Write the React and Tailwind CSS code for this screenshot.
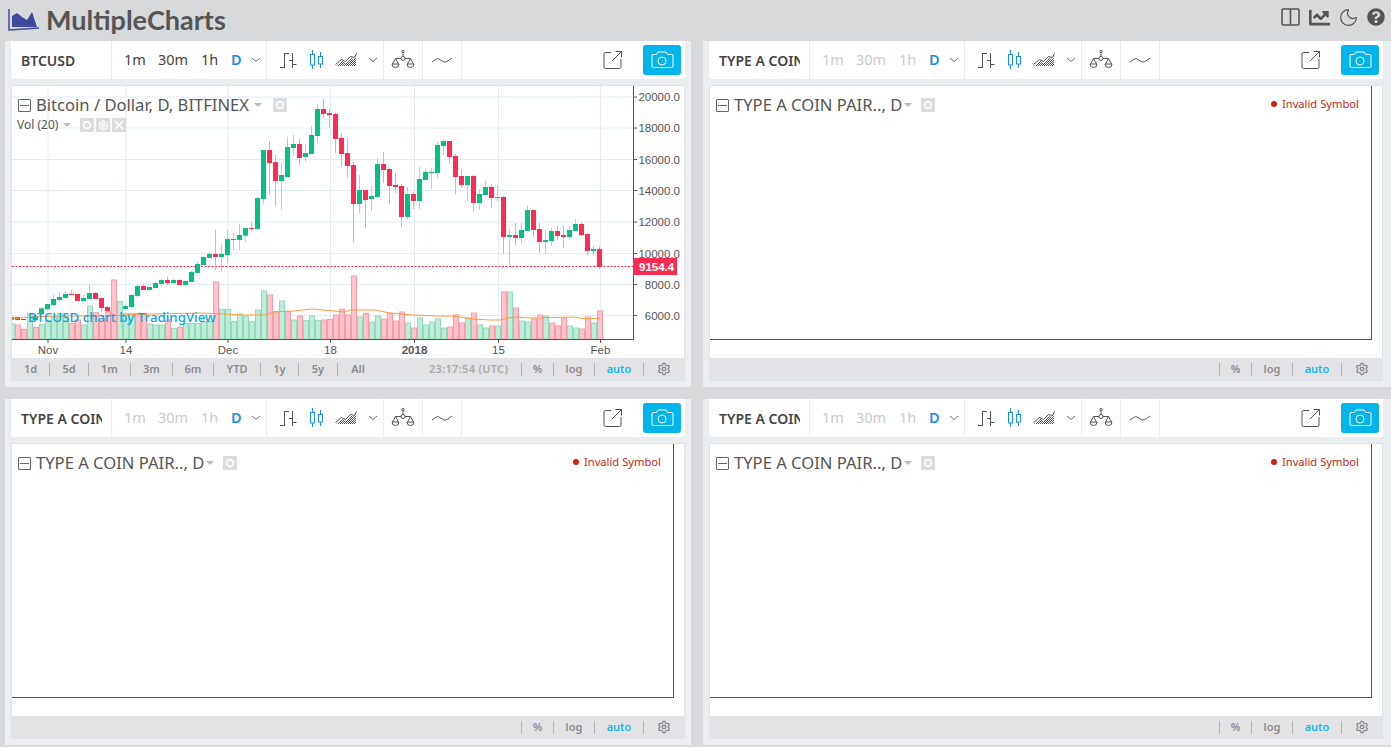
import { FaChartLine, FaQuestionCircle } from "react-icons/fa";
import { Moon, Settings } from "lucide-react";

const UI_FONT = "font-['Noto_Sans',sans-serif]";

// left part of the series, y in px / from zoomed crops
const fromLeft = [
  [291, 291, 300, 300, 1],
  [291, 291, 300, 300, 0],
  [297, 297, 300, 300, 0],
  [295, 297, 300, 303, 1],
  [285, 288, 300, 303, 1],
  [262, 265, 279, 285, 1],
  [252, 252, 268, 270, 1],
  [225, 237, 255, 258, 1],
  [216, 231, 240, 243, 1],
  [213, 222, 234, 237, 1],
  [210, 222, 225, 225, 0],
  [222, 222, 243, 243, 0],
  [225, 234, 243, 243, 1],
  [195, 219, 237, 237, 1],
  [216, 219, 237, 237, 0],
  [234, 234, 264, 276, 0],
  [258, 261, 273, 285, 0],
  [267, 270, 297, 297, 0],
  [258, 265, 285, 291, 1],
  [252, 258, 267, 270, 1],
  [222, 225, 261, 261, 1],
  [195, 198, 228, 232, 1],
  [192, 198, 210, 210, 0],
  [198, 201, 210, 213, 1],
  [186, 189, 204, 204, 1],
  [177, 180, 192, 201, 1],
  [171, 180, 189, 195, 0],
  [177, 180, 189, 189, 1],
  [178, 180, 195, 195, 0],
  [183, 183, 195, 195, 1],
  [153, 156, 186, 186, 1],
  [126, 132, 159, 159, 1],
  [108, 111, 135, 135, 1],
  [96, 102, 114, 114, 1],
  [30, 102, 111, 150, 0],
  [72, 102, 111, 153, 1],
  [30, 57, 105, 129, 1],
  [39, 57, 60, 90, 1],
  [12, 45, 60, 90, 1],
].map(([h, t, b, l, g]) => [h / 3 + 220, t / 3 + 220, b / 3 + 220, l / 3 + 220, g]);

const fromMid = [
  [414, 414, 437, 455, 1],
  [396, 414, 417, 423, 0],
  [321, 324, 417, 417, 1],
  [178, 180, 327, 342, 1],
  [153, 180, 219, 315, 0],
  [195, 216, 273, 348, 0],
  [219, 255, 273, 360, 1],
  [141, 171, 261, 261, 1],
  [135, 162, 174, 198, 1],
  [147, 162, 204, 225, 0],
  [162, 189, 201, 216, 1],
  [108, 135, 192, 192, 1],
  [42, 57, 138, 159, 1],
  [27, 57, 72, 84, 0],
  [57, 69, 75, 114, 0],
  [69, 72, 147, 189, 0],
  [129, 144, 192, 231, 0],
  [144, 189, 228, 264, 0],
  [216, 225, 342, 456, 0],
  [255, 300, 342, 369, 1],
  [300, 300, 330, 414, 0],
  [288, 318, 327, 363, 1],
  [204, 222, 321, 321, 1],
  [186, 222, 240, 279, 0],
  [234, 237, 288, 342, 0],
  [249, 285, 291, 309, 0],
  [282, 288, 381, 411, 0],
  [291, 312, 381, 387, 1],
  [306, 312, 333, 357, 0],
  [231, 267, 333, 357, 1],
  [234, 246, 270, 270, 1],
  [234, 246, 249, 297, 1],
  [156, 165, 249, 267, 1],
].map(([h, t, b, l, g]) => [h / 3 + 90, t / 3 + 90, b / 3 + 90, l / 3 + 90, g]);

const fromRight = [
  [60, 63, 78, 105, 1],
  [63, 63, 111, 132, 0],
  [102, 108, 171, 222, 0],
  [147, 168, 195, 204, 0],
  [168, 168, 195, 243, 1],
  [165, 168, 249, 276, 0],
  [207, 222, 249, 270, 1],
  [183, 201, 225, 225, 1],
  [192, 201, 234, 264, 0],
  [195, 231, 234, 243, 1],
  [228, 231, 351, 402, 0],
  [327, 345, 351, 435, 1],
  [309, 345, 354, 375, 0],
  [309, 330, 354, 369, 1],
  [258, 270, 333, 333, 1],
  [270, 270, 330, 351, 0],
  [309, 327, 366, 399, 0],
  [330, 360, 366, 402, 1],
  [324, 333, 363, 378, 1],
  [318, 333, 348, 360, 0],
  [318, 345, 351, 384, 0],
  [318, 330, 351, 360, 1],
  [297, 312, 333, 333, 1],
  [306, 312, 345, 348, 0],
  [339, 342, 393, 405, 0],
  [378, 387, 393, 408, 1],
  [381, 387, 441, 447, 0],
].map(([h, t, b, l, g]) => [h / 3 + 120, t / 3 + 120, b / 3 + 120, l / 3 + 120, g]);

const candles = [...fromLeft, ...fromMid, ...fromRight];

// volume bar tops in zoomed px, base is 207
const volumes = [
  [165, 0], [178, 0], [130, 1], [172, 0], [163, 1], [152, 1], [140, 1], [130, 1], [140, 1], [160, 0],
  [150, 0], [165, 1], [108, 1], [128, 0], [145, 0], [125, 0], [30, 0], [95, 1], [130, 1], [130, 1],
  [130, 0], [130, 0], [162, 1], [165, 1], [165, 1], [150, 0], [175, 1], [172, 0], [160, 1], [160, 1],
  [160, 1], [155, 1], [155, 1], [36, 0], [118, 1], [118, 1], [155, 1], [132, 1], [140, 1], [155, 1],
  [120, 1], [63, 1], [75, 0], [125, 0], [93, 1], [125, 0], [150, 1], [138, 0], [152, 1], [138, 1],
  [152, 1], [150, 0], [148, 0], [135, 0], [118, 0], [135, 0], [18, 0], [141, 1], [130, 0], [156, 1],
  [138, 1], [147, 0], [130, 0], [153, 0], [126, 0], [159, 1], [174, 0], [144, 1], [165, 1], [156, 1],
  [147, 1], [174, 1], [171, 0], [135, 0], [159, 0], [144, 1], [129, 0], [165, 1], [174, 1], [168, 0],
  [168, 1], [66, 0], [66, 1], [114, 0], [153, 1], [156, 1], [147, 0], [135, 0], [138, 1], [159, 0],
  [168, 0], [144, 0], [168, 1], [174, 1], [177, 0], [141, 0], [159, 1], [123, 0],
];

const maLine =
  "12,319 30,317 60,316 100,316 150,314 200,313 225,314 240,315 265,315 273,312 293,311 313,309 345,312 350,310 375,310 390,313 413,315 440,316 453,316 473,319 490,320 500,320 513,317 533,318 573,317 586,319 600,318";

const priceTicks = [
  ["20000.0", 97],
  ["18000.0", 128],
  ["16000.0", 159.5],
  ["14000.0", 190.5],
  ["12000.0", 222],
  ["10000.0", 253.5],
  ["8000.0", 284.5],
  ["6000.0", 315.5],
];

const timeTicks = [
  ["Nov", 48],
  ["14", 126],
  ["Dec", 228],
  ["18", 330.5],
  ["2018", 414.5],
  ["15", 498.5],
  ["Feb", 600.5],
];

const PriceChart = () => (
  <svg viewBox="12 86 672 272" className="block w-[672px] h-[272px]">
    <defs>
      <clipPath id="plot">
        <rect x="12" y="86" width="621" height="253" />
      </clipPath>
    </defs>
    {priceTicks.map(([, y]) => (
      <line key={y} x1="12" x2="633" y1={y} y2={y} stroke="#e1ecf3" strokeWidth="1" />
    ))}
    {timeTicks.map(([, x]) => (
      <line key={x} x1={x} x2={x} y1="86" y2="339" stroke="#e1ecf3" strokeWidth="1" />
    ))}
    <line x1="12" x2="633" y1="266.5" y2="266.5" stroke="#ff2b52" strokeWidth="1" strokeDasharray="2 1.5" />

    <g clipPath="url(#plot)">
      {candles.map(([high, top, bottom, low, up], i) => {
        const cx = 11.5 + i * 6;
        return (
          <g key={i}>
            <line x1={cx} x2={cx} y1={high} y2={low} stroke={up ? "#9edcc4" : "#f5a3b4"} strokeWidth="1" />
            <rect x={cx - 2.5} y={top} width="5" height={bottom - top} fill={up ? "#03c087" : "#ff2b52"} />
          </g>
        );
      })}
      <rect x="11" y="324" width="4" height="15" fill="#bfecd8" stroke="#8fdcbd" />
      {volumes.map(([top, up], i) => {
        const x = 15 + i * 6;
        const y = 270 + top / 3;
        return (
          <rect
            key={i}
            x={x + 0.5}
            y={y}
            width="5"
            height={339 - y}
            fill={up ? "#bfecd8" : "#ffc4cb"}
            stroke={up ? "#8fdcbd" : "#fb9aa9"}
            strokeWidth="1"
          />
        );
      })}
      <polyline points={maLine} fill="none" stroke="#ff9a3c" strokeWidth="1" />
    </g>

    <line x1="12" x2="633" y1="339.5" y2="339.5" stroke="#555" strokeWidth="1" />
    <line x1="633.5" x2="633.5" y1="86" y2="340" stroke="#555" strokeWidth="1" />

    {priceTicks.map(([label, y]) => (
      <g key={label}>
        <line x1="634" x2="637" y1={y} y2={y} stroke="#555" />
        <text x="680" y={y + 4} textAnchor="end" fontSize="11.5" fill="#555" fontFamily="Liberation Sans, sans-serif">
          {label}
        </text>
      </g>
    ))}
    {timeTicks.map(([label, x]) => (
      <g key={label}>
        <line x1={x} x2={x} y1="340" y2="343" stroke="#555" />
        <text
          x={x}
          y="354"
          textAnchor="middle"
          fontSize="11.5"
          fontWeight={label === "2018" ? 700 : 400}
          fill="#555"
          fontFamily="Liberation Sans, sans-serif"
        >
          {label}
        </text>
      </g>
    ))}
    <rect x="633" y="258" width="44" height="17" fill="#ff2b52" />
    <text x="639" y="270.5" fontSize="11.5" fontWeight="700" fill="#fff" fontFamily="Liberation Sans, sans-serif">
      9154.4
    </text>
  </svg>
);

const BarsIcon = () => (
  <svg width="22" height="22" viewBox="0 0 22 22" fill="none" stroke="#50535e" strokeWidth="1">
    <path d="M7.5 4v15M3 18.5h4.5M7.5 4.5h4.5M15.5 4v15M12 11.5h3.5M15.5 15.5h4" />
  </svg>
);

const CandlesIcon = () => (
  <svg width="22" height="22" viewBox="0 0 22 22" fill="none" stroke="#1a8de6" strokeWidth="1">
    <path d="M5.5 1v4M5.5 16v4M13.5 3v4M13.5 15v4" />
    <rect x="3.5" y="5.5" width="4" height="10.5" />
    <rect x="11.5" y="7.5" width="4" height="7.5" />
  </svg>
);

const AreaIcon = ({ id }) => (
  <svg width="24" height="22" viewBox="0 0 24 22" fill="none">
    <defs>
      <pattern id={id} width="2" height="2" patternUnits="userSpaceOnUse">
        <rect width="1" height="1" fill="#50535e" />
        <rect x="1" y="1" width="1" height="1" fill="#50535e" />
      </pattern>
    </defs>
    <path d="M2 17l6-5 4 2 5-5 4 1 1-4v11z" fill={`url(#${id})`} />
    <path d="M1.5 15.5l6-5 4 2 5-5 4 1 2-4" stroke="#50535e" />
  </svg>
);

const ScalesIcon = () => (
  <svg width="26" height="22" viewBox="0 0 26 22" fill="none" stroke="#50535e" strokeWidth="1">
    <circle cx="13" cy="9.5" r="2" />
    <circle cx="13" cy="2.5" r="1.2" />
    <path d="M13 4v3.5M11 9.5H5.5L2.5 15M15 9.5h5.5l3 5.5M5.5 9.5l3 5.5M20.5 9.5l-3 5.5" />
    <path d="M2 15h7M17 15h7M2 15a3.5 3.5 0 0 0 7 0M17 15a3.5 3.5 0 0 0 7 0" />
  </svg>
);

const LineIcon = () => (
  <svg width="24" height="22" viewBox="0 0 24 22" fill="none" stroke="#50535e" strokeWidth="1">
    <path d="M2 13c3-2 5-4 7-3s4 3 6 3 4-2 7-4" />
  </svg>
);

const Chevron = () => (
  <svg width="10" height="6" viewBox="0 0 10 6" fill="none" stroke="#6b6e78" strokeWidth="1">
    <path d="M1 1l4 3.5L9 1" />
  </svg>
);

const ToolbarSegment = ({ className = "", children }) => (
  <div className={`flex items-center bg-white h-full ${className}`}>{children}</div>
);

const Toolbar = ({ symbol, active, id }) => (
  <div className={`flex h-[38px] gap-px ${UI_FONT}`}>
    <ToolbarSegment className="w-[100px] rounded-bl-[3px] pl-[10px]">
      <span className="block w-[81px] overflow-hidden whitespace-nowrap text-[14px] font-semibold text-[#444]">
        {symbol}
      </span>
    </ToolbarSegment>
    <ToolbarSegment className={`w-[154px] text-[14.5px] pl-[12px] ${active ? "text-[#444]" : "text-[#c9cbd0]"}`}>
      <span className="w-[34px]">1m</span>
      <span className="w-[43px]">30m</span>
      <span className="w-[30px]">1h</span>
      <span className="w-[20px] font-semibold text-[#1a8de6]">D</span>
      <Chevron />
    </ToolbarSegment>
    <ToolbarSegment className="w-[116px] pl-[10px]">
      <span className="w-[30px]">
        <BarsIcon />
      </span>
      <span className="w-[27px]">
        <CandlesIcon />
      </span>
      <span className="w-[30px]">
        <AreaIcon id={id} />
      </span>
      <span className="ml-[4px]">
        <Chevron />
      </span>
    </ToolbarSegment>
    <ToolbarSegment className="w-[38px] justify-center">
      <ScalesIcon />
    </ToolbarSegment>
    <ToolbarSegment className="w-[38px] justify-center">
      <LineIcon />
    </ToolbarSegment>
    <ToolbarSegment className="flex-1 justify-end gap-[20px] rounded-br-[3px] pr-[4px]">
      <svg width="20" height="20" viewBox="0 0 20 20" fill="none" stroke="#50535e" strokeWidth="1">
        <path d="M8 2.5H2.5a1.5 1.5 0 0 0-1.5 1.5v13a1.5 1.5 0 0 0 1.5 1.5h14a1.5 1.5 0 0 0 1.5-1.5V9M9 11L18.5 1.5M12.5 1.5h6v6" />
      </svg>
      <div className="flex h-[30px] w-[38px] items-center justify-center rounded-[3px] bg-[#00b5ec]">
        <svg width="24" height="18" viewBox="0 0 24 18" fill="none" stroke="#fff" strokeWidth="1">
          <path d="M2.5 3.5h4l1.5-2.5h8l1.5 2.5h4a1.5 1.5 0 0 1 1.5 1.5v10a1.5 1.5 0 0 1-1.5 1.5h-18a1.5 1.5 0 0 1-1.5-1.5V5a1.5 1.5 0 0 1 1.5-1.5z" />
          <circle cx="12" cy="10" r="4" />
        </svg>
      </div>
    </ToolbarSegment>
  </div>
);

const MiniBox = ({ children, className = "" }) => (
  <span className={`flex h-[14px] w-[14px] items-center justify-center bg-[#dcdcdc] ${className}`}>{children}</span>
);

const Eye = () => (
  <svg width="10" height="10" viewBox="0 0 10 10" fill="none" stroke="#fff" strokeWidth="1.6">
    <circle cx="5" cy="5" r="3.4" />
  </svg>
);

const Caret = ({ className = "" }) => (
  <span className={`block border-x-[4px] border-t-[4px] border-x-transparent border-t-[#bbb] ${className}`} />
);

const Legend = ({ title, caretGap, boxGap }) => (
  <div className={`absolute left-[6px] top-[11px] flex items-center ${UI_FONT}`}>
    <span className="flex h-[13px] w-[13px] items-center justify-center rounded-[1px] border border-[#666]">
      <span className="h-px w-[9px] bg-[#666]" />
    </span>
    <span className="ml-[5px] whitespace-nowrap text-[16.6px] leading-[16px] text-[#555]">{title}</span>
    <Caret className={caretGap} />
    <MiniBox className={boxGap}>
      <Eye />
    </MiniBox>
  </div>
);

const VolumeLegend = () => (
  <div className={`absolute left-[5px] top-[32px] flex items-center ${UI_FONT}`}>
    <span className="text-[12px] leading-[14px] text-[#555]">Vol (20)</span>
    <Caret className="ml-[5px]" />
    <MiniBox className="ml-[9px]">
      <Eye />
    </MiniBox>
    <MiniBox className="ml-[2px]">
      <Settings size={11} color="#fff" strokeWidth={2.5} />
    </MiniBox>
    <MiniBox className="ml-[2px]">
      <svg width="10" height="10" viewBox="0 0 10 10" stroke="#fff" strokeWidth="1.6">
        <path d="M1 1l8 8M9 1l-8 8" />
      </svg>
    </MiniBox>
  </div>
);

const rangeItems = [
  ["1d", "w-[38px]"],
  ["5d", "w-[39px]"],
  ["1m", "w-[42px]"],
  ["3m", "w-[42px]"],
  ["6m", "w-[41px]"],
  ["YTD", "w-[47px]"],
  ["1y", "w-[38px]"],
  ["5y", "w-[39px]"],
];

const BottomBar = ({ full }) => (
  <div className={`flex h-[22px] items-center bg-[#e3e3e5] text-[11px] font-semibold text-[#8b8b8f] ${UI_FONT}`}>
    {full &&
      rangeItems.map(([label, width]) => (
        <span key={label} className={`flex h-[13px] items-center justify-center border-r border-[#b4b4b4] ${width}`}>
          {label}
        </span>
      ))}
    {full && <span className="w-[40px] text-center">All</span>}
    {full && <span className="ml-[51px] whitespace-nowrap tracking-[0.3px] text-[#aaa]">23:17:54 (UTC)</span>}
    <span className="ml-auto flex h-[13px] w-[33px] items-center justify-center border-x border-[#b4b4b4]">%</span>
    <span className="flex h-[13px] w-[41px] items-center justify-center border-r border-[#b4b4b4]">log</span>
    <span className="flex h-[13px] w-[49px] items-center justify-center border-r border-[#b4b4b4] text-[#19b5e8]">
      auto
    </span>
    <span className="flex w-[40px] justify-center">
      <Settings size={14} color="#8b8b8f" strokeWidth={2.2} />
    </span>
  </div>
);

const ChartPanel = ({ symbol, id, filled }) => (
  <section className="h-[346px] bg-[#ebeef1] pl-[6px]">
    <div className="flex w-[674px] flex-col gap-[6px]">
      <Toolbar symbol={symbol} active={filled} id={id} />
      <div className="relative border border-[#dfe3e6] bg-white">
        {filled ? (
          <PriceChart />
        ) : (
          <div className="h-[272px]">
            <div className="h-[254px] w-[662px] border-r border-b border-[#555]" />
          </div>
        )}
        <BottomBar full={filled} />
        {filled ? (
          <>
            <Legend title="Bitcoin / Dollar, D, BITFINEX" caretGap="ml-[5px]" boxGap="ml-[11px]" />
            <VolumeLegend />
            <span
              className={`absolute left-[16px] top-[222px] whitespace-nowrap text-[13.3px] font-medium leading-[18px] text-[#0fa4e0] ${UI_FONT}`}
            >
              BTCUSD chart by TradingView
            </span>
          </>
        ) : (
          <>
            <Legend title="TYPE A COIN PAIR.., D" caretGap="ml-[2px]" boxGap="ml-[9px]" />
            <div
              className={`absolute right-[23px] top-[10px] flex items-center gap-[5px] text-[11.2px] leading-[16px] text-[#c8261b] ${UI_FONT}`}
            >
              <span className="h-[6px] w-[6px] rounded-full bg-[#d0200f]" />
              Invalid Symbol
            </div>
          </>
        )}
      </div>
    </div>
  </section>
);

const Header = () => (
  <header className="flex h-[41px] items-center pl-[8px] pr-[6px]">
    <svg width="32" height="24" viewBox="0 0 32 24" className="mb-[2px]">
      <path d="M4 19V8l5-3 5 4 5 3 5-8 5 15z" fill="#3f4a9a" />
      <path d="M1 1v21l30-2" fill="none" stroke="#3f4a9a" strokeWidth="1.5" />
    </svg>
    <span className="ml-[6px] mb-[2px] font-['Lato',sans-serif] text-[27px] font-bold leading-none text-[#555]">
      MultipleCharts
    </span>
    <div className="ml-auto mb-[7px] flex items-center text-[#555]">
      <svg width="19" height="18" viewBox="0 0 19 18" fill="none" stroke="#555" strokeWidth="1.6">
        <rect x="1" y="1" width="17" height="16" rx="1" />
        <path d="M9.5 1v16" />
      </svg>
      <FaChartLine className="ml-[8px] h-[21px] w-[23px]" />
      <Moon size={21} strokeWidth={1.4} className="ml-[7px]" />
      <FaQuestionCircle className="ml-[8px] h-[18px] w-[18px]" />
    </div>
  </header>
);

export default function App() {
  return (
    <div className="h-[747px] w-[1391px] overflow-hidden bg-[#d8d9db]">
      <Header />
      <div className="ml-[5px] grid grid-cols-[686px_688px] gap-[12px]">
        <ChartPanel symbol="BTCUSD" id="area-1" filled />
        <ChartPanel symbol="TYPE A COIN" id="area-2" />
        <ChartPanel symbol="TYPE A COIN" id="area-3" />
        <ChartPanel symbol="TYPE A COIN" id="area-4" />
      </div>
    </div>
  );
}
